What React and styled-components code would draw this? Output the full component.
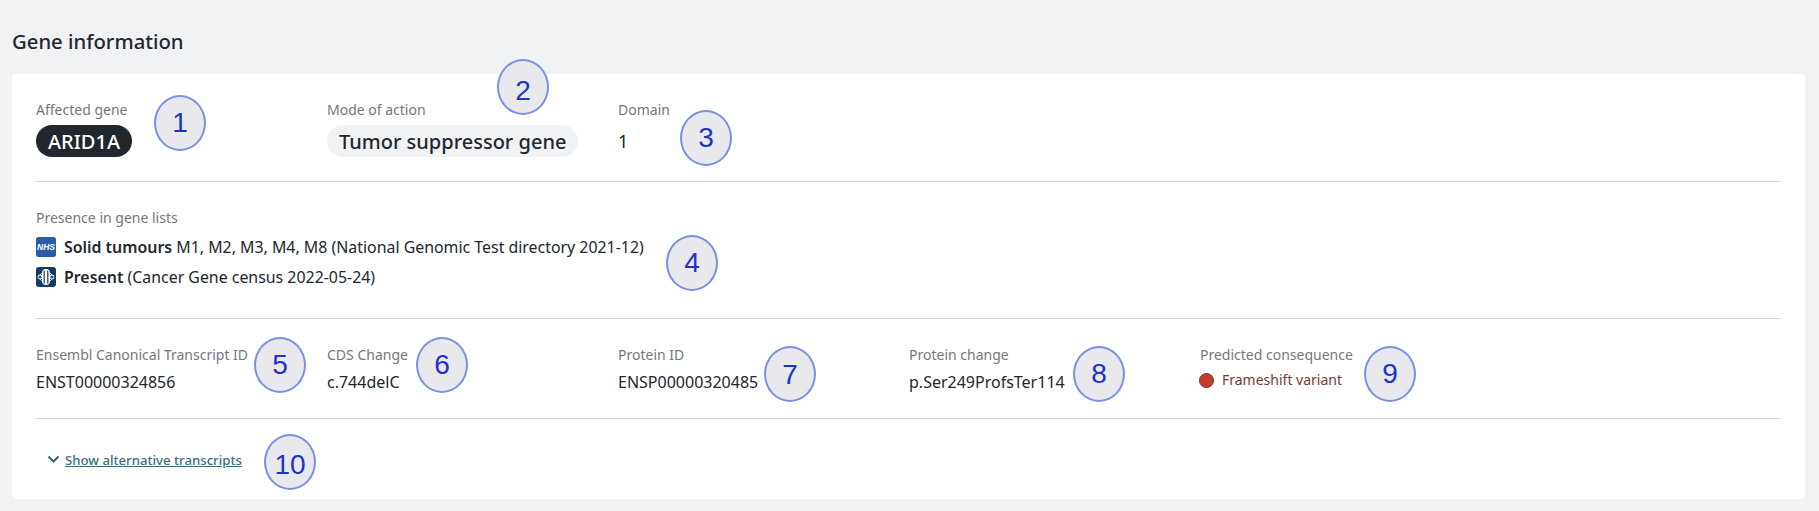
import React from "react";
import styled, { createGlobalStyle } from "styled-components";

const Global = createGlobalStyle`
  html, body { margin: 0; padding: 0; background: #f1f2f4; }
  body { font-family: "Noto Sans", "Open Sans", sans-serif; color: #212529; }
`;

const Page = styled.div`
  position: relative;
  width: 1819px;
  height: 511px;
  overflow: hidden;
  padding: 29px 14px 0 12px;
  box-sizing: border-box;
`;

const Title = styled.h2`
  margin: 0 0 20px;
  height: 25px;
  font-size: 20.3px;
  line-height: 25px;
  font-weight: 500;
  color: #22272e;
`;

const Card = styled.section`
  height: 425px;
  box-sizing: border-box;
  background: #fff;
  border-radius: 4px;
  padding: 0 24px;
`;

const Section = styled.div`
  height: ${(p) => p.$h}px;
  box-sizing: border-box;
  padding-top: ${(p) => p.$pt}px;
  border-bottom: ${(p) => (p.$last ? "none" : "1px solid #d4d4d6")};
`;

const Columns = styled.div`
  display: grid;
  grid-template-columns: repeat(5, 291px);
`;

const Field = styled.div`
  display: flex;
  flex-direction: column;
  align-items: flex-start;
`;

const Label = styled.div`
  font-size: 14px;
  line-height: 18px;
  color: #74777c;
`;

const Pill = styled.span`
  display: inline-flex;
  align-items: center;
  height: 32px;
  margin-top: 6px;
  padding: 0 12px;
  border-radius: 16px;
  font-size: 20px;
  font-weight: 500;
  background: ${(p) => (p.$dark ? "#22272e" : "#f1f2f4")};
  color: ${(p) => (p.$dark ? "#fff" : "#22272e")};
`;

const PlainValue = styled.div`
  height: 32px;
  margin-top: 6px;
  font-size: 18px;
  line-height: 32px;
  color: #22272e;
`;

const Value = styled.div`
  margin-top: 8px;
  font-size: 16px;
  line-height: 20px;
  color: #22272e;
`;

const Consequence = styled.div`
  display: flex;
  align-items: center;
  gap: 8px;
  margin-top: 6px;
  font-size: 14px;
  line-height: 20px;
  color: #7a3a37;
`;

const Dot = styled.span`
  width: 15px;
  height: 15px;
  margin-left: -1px;
  border-radius: 50%;
  background: #c43c2c;
  border: 1px solid #8e2a20;
  box-sizing: border-box;
`;

const ListRow = styled.div`
  display: flex;
  align-items: center;
  gap: 8px;
  height: 20px;
  margin-top: ${(p) => p.$mt}px;
  font-size: 15.9px;
  color: #22272e;
`;

const Strong = styled.b`
  font-weight: 600;
`;

const IconBox = styled.svg`
  display: block;
  flex: none;
`;

const ShowLink = styled.a`
  display: inline-flex;
  align-items: center;
  gap: 5px;
  margin-left: 11px;
  font-size: 13.2px;
  line-height: 18px;
  font-weight: 500;
  color: #3a7176;
  text-decoration: underline;
`;

const Marker = styled.div`
  position: absolute;
  left: ${(p) => p.$x - 26}px;
  top: ${(p) => p.$y - 28}px;
  width: 52px;
  height: 56px;
  box-sizing: border-box;
  border-radius: 50%;
  border: 2px solid #7a8fe6;
  background: #e9e9ed;
  padding-top: ${(p) => p.$dy || 0}px;
  display: flex;
  align-items: center;
  justify-content: center;
  font-family: "Liberation Sans", Arial, sans-serif;
  font-size: 28px;
  color: #1c34c8;
`;

const NhsIcon = () => (
  <IconBox width="20" height="20" viewBox="0 0 20 20">
    <rect width="20" height="20" rx="2.5" fill="#2a5ca8" />
    <text x="10" y="13" textAnchor="middle" fontFamily="Liberation Sans" fontSize="8.5" fontWeight="700" fontStyle="italic" fill="#fff">NHS</text>
  </IconBox>
);

const CensusIcon = () => (
  <IconBox width="20" height="20" viewBox="0 0 20 20">
    <rect width="20" height="20" rx="3" fill="#163a62" />
    <rect x="6" y="2" width="8" height="16" rx="4" fill="#fff" />
    <circle cx="4" cy="10" r="2.4" fill="#fff" />
    <circle cx="16" cy="10" r="2.4" fill="#fff" />
    <g fill="none" stroke="#163a62" strokeWidth="1.2" strokeLinecap="round">
      <path d="M8.2 4V16" />
      <path d="M11.8 4V16" />
      <circle cx="4" cy="10" r="1" />
      <circle cx="16" cy="10" r="1" />
    </g>
    <g fill="none" stroke="#fff" strokeWidth="1">
      <path d="M6 6.5C4.5 6.5 4.5 8 4 8" />
      <path d="M6 13.5C4.5 13.5 4.5 12 4 12" />
      <path d="M14 6.5C15.5 6.5 15.5 8 16 8" />
      <path d="M14 13.5C15.5 13.5 15.5 12 16 12" />
    </g>
  </IconBox>
);

const Chevron = () => (
  <IconBox width="13" height="9" viewBox="0 0 13 9">
    <path d="M1.5 1.5L6.5 6.5L11.5 1.5" fill="none" stroke="#2d6a70" strokeWidth="2" />
  </IconBox>
);

const markers = [
  [1, 180, 123, 0], [2, 523, 87, 8], [3, 706, 138, 0], [4, 692, 263, 0], [5, 280, 365, 0],
  [6, 442, 365, 0], [7, 790, 374, 2], [8, 1099, 374, 0], [9, 1390, 374, 0], [10, 290, 462, 5],
];

const transcript = [
  ["Ensembl Canonical Transcript ID", "ENST00000324856"],
  ["CDS Change", "c.744delC"],
  ["Protein ID", "ENSP00000320485"],
  ["Protein change", "p.Ser249ProfsTer114"],
];

export default function App() {
  return (
    <Page>
      <Global />
      <Title>Gene information</Title>
      <Card>
        <Section $h={108} $pt={27}>
          <Columns>
            <Field>
              <Label>Affected gene</Label>
              <Pill $dark>ARID1A</Pill>
            </Field>
            <Field>
              <Label>Mode of action</Label>
              <Pill>Tumor suppressor gene</Pill>
            </Field>
            <Field>
              <Label>Domain</Label>
              <PlainValue>1</PlainValue>
            </Field>
          </Columns>
        </Section>
        <Section $h={137} $pt={27}>
          <Label>Presence in gene lists</Label>
          <ListRow $mt={10}>
            <NhsIcon />
            <span><Strong>Solid tumours</Strong> M1, M2, M3, M4, M8 (National Genomic Test directory 2021-12)</span>
          </ListRow>
          <ListRow $mt={10}>
            <CensusIcon />
            <span><Strong>Present</Strong> (Cancer Gene census 2022-05-24)</span>
          </ListRow>
        </Section>
        <Section $h={100} $pt={27}>
          <Columns>
            {transcript.map(([l, v]) => (
              <Field key={l}>
                <Label>{l}</Label>
                <Value>{v}</Value>
              </Field>
            ))}
            <Field>
              <Label>Predicted consequence</Label>
              <Consequence><Dot />Frameshift variant</Consequence>
            </Field>
          </Columns>
        </Section>
        <Section $h={80} $pt={28} $last>
          <ShowLink><Chevron />Show alternative transcripts</ShowLink>
        </Section>
      </Card>
      {markers.map(([n, x, y, dy]) => (
        <Marker key={n} $x={x} $y={y} $dy={dy}>{n}</Marker>
      ))}
    </Page>
  );
}
